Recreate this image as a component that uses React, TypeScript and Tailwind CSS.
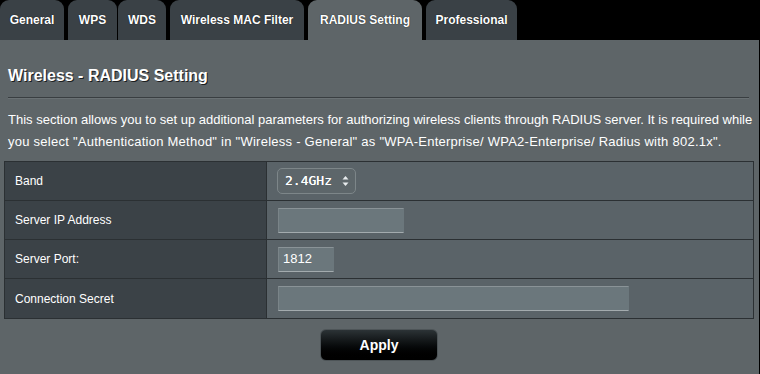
import React from "react";

const tabs = [
  { label: "General", w: "w-[64px]", ml: "ml-0", active: false },
  { label: "WPS", w: "w-[49px]", ml: "ml-[4px]", active: false },
  { label: "WDS", w: "w-[48px]", ml: "ml-[1px]", active: false },
  { label: "Wireless MAC Filter", w: "w-[134px]", ml: "ml-[4px]", active: false },
  { label: "RADIUS Setting", w: "w-[114px]", ml: "ml-[4px]", active: true },
  { label: "Professional", w: "w-[91px]", ml: "ml-[4px]", active: false },
];

function Row({ label, children, last }: { label: string; children: React.ReactNode; last?: boolean }) {
  return (
    <div className={`flex h-[39px] ${last ? "" : "border-b border-[#2b3033]"}`}>
      <div className="w-[262px] shrink-0 bg-[#3b4247] border-r border-[#2b3033] flex items-center pl-[10px] text-[12px] text-white">
        {label}
      </div>
      <div className="flex-1 bg-[#5a6368] flex items-center pl-[11px]">{children}</div>
    </div>
  );
}

function TextInput({ w, value }: { w: string; value?: string }) {
  return (
    <div
      className={`${w} h-[25px] bg-[#6b777c] border-t border-t-[#8a9397] border-b border-b-[#a3abae] border-l border-l-[#7a8488] border-r border-r-[#6b777c] flex items-center pl-[4px] text-[13px] text-white`}
    >
      {value}
    </div>
  );
}

export default function App() {
  return (
    <div className="w-[760px] h-[374px] bg-black overflow-hidden" style={{ fontFamily: '"Liberation Sans", Arial, sans-serif' }}>
      <div className="flex h-[40px] items-end">
        {tabs.map((t) => (
          <div
            key={t.label}
            className={`${t.w} ${t.ml} h-[40px] shrink-0 rounded-t-[9px] flex items-center justify-center pb-[1px] text-[12px] font-bold text-white [text-shadow:0_0_1px_#000] ${
              t.active ? "bg-[#5e6568]" : "bg-[#3a4146]"
            }`}
          >
            {t.label}
          </div>
        ))}
      </div>
      <div className="w-[759px] h-[334px] bg-[#5e6568]">
        <div className="px-[8px] pt-[25px]">
          <div className="text-[16px] font-bold text-white leading-[22px] [text-shadow:1px_1px_0_#1a1d1f]">
            Wireless - RADIUS Setting
          </div>
          <div className="mt-[10px] h-[1px] w-[741px] bg-[#393e41] shadow-[0_1px_0_#6a7174]" />
          <div className="mt-[11px] text-[13px] text-white leading-[22px] whitespace-nowrap">
            <div>
              This section allows you to set up additional parameters for authorizing wireless clients through RADIUS server. It is required while
            </div>
            <div className="tracking-[0.25px]">
              you select "Authentication Method" in "Wireless - General" as "WPA-Enterprise/ WPA2-Enterprise/ Radius with 802.1x".
            </div>
          </div>
        </div>
        <div className="ml-[4px] mt-[8px] w-[750px] border border-[#2b3033]">
          <Row label="Band">
            <div className="w-[79px] h-[26px] -ml-[1px] rounded-[5px] border border-[#7d8689] bg-[#5d666a] flex items-center justify-between pl-[7px] pr-[6px]">
              <span className="text-[13px] text-white [text-shadow:0_0_0.5px_#fff]" style={{ fontFamily: '"DejaVu Sans Mono", monospace' }}>
                2.4GHz
              </span>
              <svg width="7" height="12" viewBox="0 0 7 12">
                <path d="M3.5 1 L6.5 4.5 L0.5 4.5 Z" fill="#e8ecee" />
                <path d="M3.5 11 L6.5 7.5 L0.5 7.5 Z" fill="#e8ecee" />
              </svg>
            </div>
          </Row>
          <Row label="Server IP Address">
            <TextInput w="w-[126px]" />
          </Row>
          <Row label="Server Port:">
            <TextInput w="w-[56px]" value="1812" />
          </Row>
          <Row label="Connection Secret" last>
            <TextInput w="w-[351px]" />
          </Row>
        </div>
        <div className="flex justify-center mt-[10px] pr-[1px]">
          <button className="w-[118px] h-[32px] rounded-[6px] border border-[#4d5457] bg-gradient-to-b from-[#2c3336] to-[#000000] text-[14px] font-bold text-white">
            Apply
          </button>
        </div>
      </div>
    </div>
  );
}
